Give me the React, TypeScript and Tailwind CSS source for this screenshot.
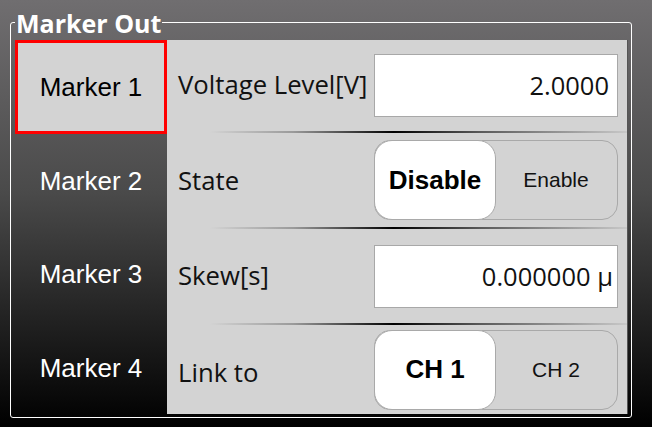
import React from "react";

const labelFont = { fontFamily: '"Open Sans", "Noto Sans", sans-serif' };
const arialFont = { fontFamily: '"Liberation Sans", Arial, sans-serif' };

function Separator() {
  return (
    <div className="h-[2px] w-full pl-[43px]">
      <div className="h-full w-full bg-[linear-gradient(to_right,#d3d3d3_0%,#9a9a9a_20%,#000000_44%,#5a5a5a_65%,#c8c8c8_100%)]" />
    </div>
  );
}

function InputBox({ value, pr }: { value: string; pr: string }) {
  return (
    <div
      className={`flex h-[63px] w-[244px] items-center justify-end border border-[#a8a8a8] bg-white ${pr} text-[25.5px] text-[#111]`}
      style={labelFont}
    >
      {value}
    </div>
  );
}

function Toggle({ on, off }: { on: string; off: string }) {
  return (
    <div className="flex h-[80px] w-[244px] rounded-[16px] border border-[#a9a9a9] bg-[#d3d3d3]" style={arialFont}>
      <div className="-m-px flex h-[80px] w-[122px] items-center justify-center rounded-[18px] border border-[#a9a9a9] bg-white text-[26px] font-bold text-black">
        {on}
      </div>
      <div className="flex flex-1 items-center justify-center text-[21px] text-[#111]">{off}</div>
    </div>
  );
}

function Row({
  label,
  h,
  labelPad,
  children,
}: {
  label: string;
  h: string;
  labelPad: string;
  children: React.ReactNode;
}) {
  return (
    <div className={`flex ${h} items-center justify-between pl-[11px] pr-[9px]`}>
      <span className={`${labelPad} text-[25.7px] text-[#111]`} style={labelFont}>
        {label}
      </span>
      {children}
    </div>
  );
}

export default function App() {
  return (
    <div className="h-[427px] w-[652px] overflow-hidden bg-[linear-gradient(to_bottom,#706e70_0%,#4a4a4a_45%,#000000_100%)] pt-[8px] pl-[10px]">
      <fieldset className="w-[622px] rounded-[3px] border border-white pl-[4px] pr-[3px] pb-[3px]">
        <legend
          className="ml-0 px-[1px] pt-[2px] text-[25px] font-bold leading-[26px] text-white"
          style={labelFont}
        >
          Marker Out
        </legend>
        <div className="mt-[4px] flex h-[374px]">
          <div className="flex w-[152px] flex-col" style={arialFont}>
            <div className="flex h-[94px] items-center justify-center border-[3px] border-[#ff0000] bg-[#d3d3d3] text-[26px] text-black">
              Marker 1
            </div>
            <div className="flex h-[94px] items-center justify-center text-[26px] text-white">Marker 2</div>
            <div className="flex h-[93px] items-center justify-center text-[26px] text-white">Marker 3</div>
            <div className="flex h-[93px] items-center justify-center pt-[2px] text-[26px] text-white">Marker 4</div>
          </div>
          <div className="flex flex-1 flex-col border-r border-[#555] bg-[#d3d3d3]">
            <Row label="Voltage Level[V]" h="h-[91px]" labelPad="pt-0">
              <InputBox value="2.0000" pr="pr-[8px]" />
            </Row>
            <Separator />
            <Row label="State" h="h-[94px]" labelPad="pt-[2px]">
              <Toggle on="Disable" off="Enable" />
            </Row>
            <Separator />
            <Row label="Skew[s]" h="h-[94px]" labelPad="pt-0">
              <InputBox value="0.000000 μ" pr="pr-[4px]" />
            </Row>
            <Separator />
            <Row label="Link to" h="h-[89px]" labelPad="pt-[8px]">
              <Toggle on="CH 1" off="CH 2" />
            </Row>
          </div>
        </div>
      </fieldset>
    </div>
  );
}
